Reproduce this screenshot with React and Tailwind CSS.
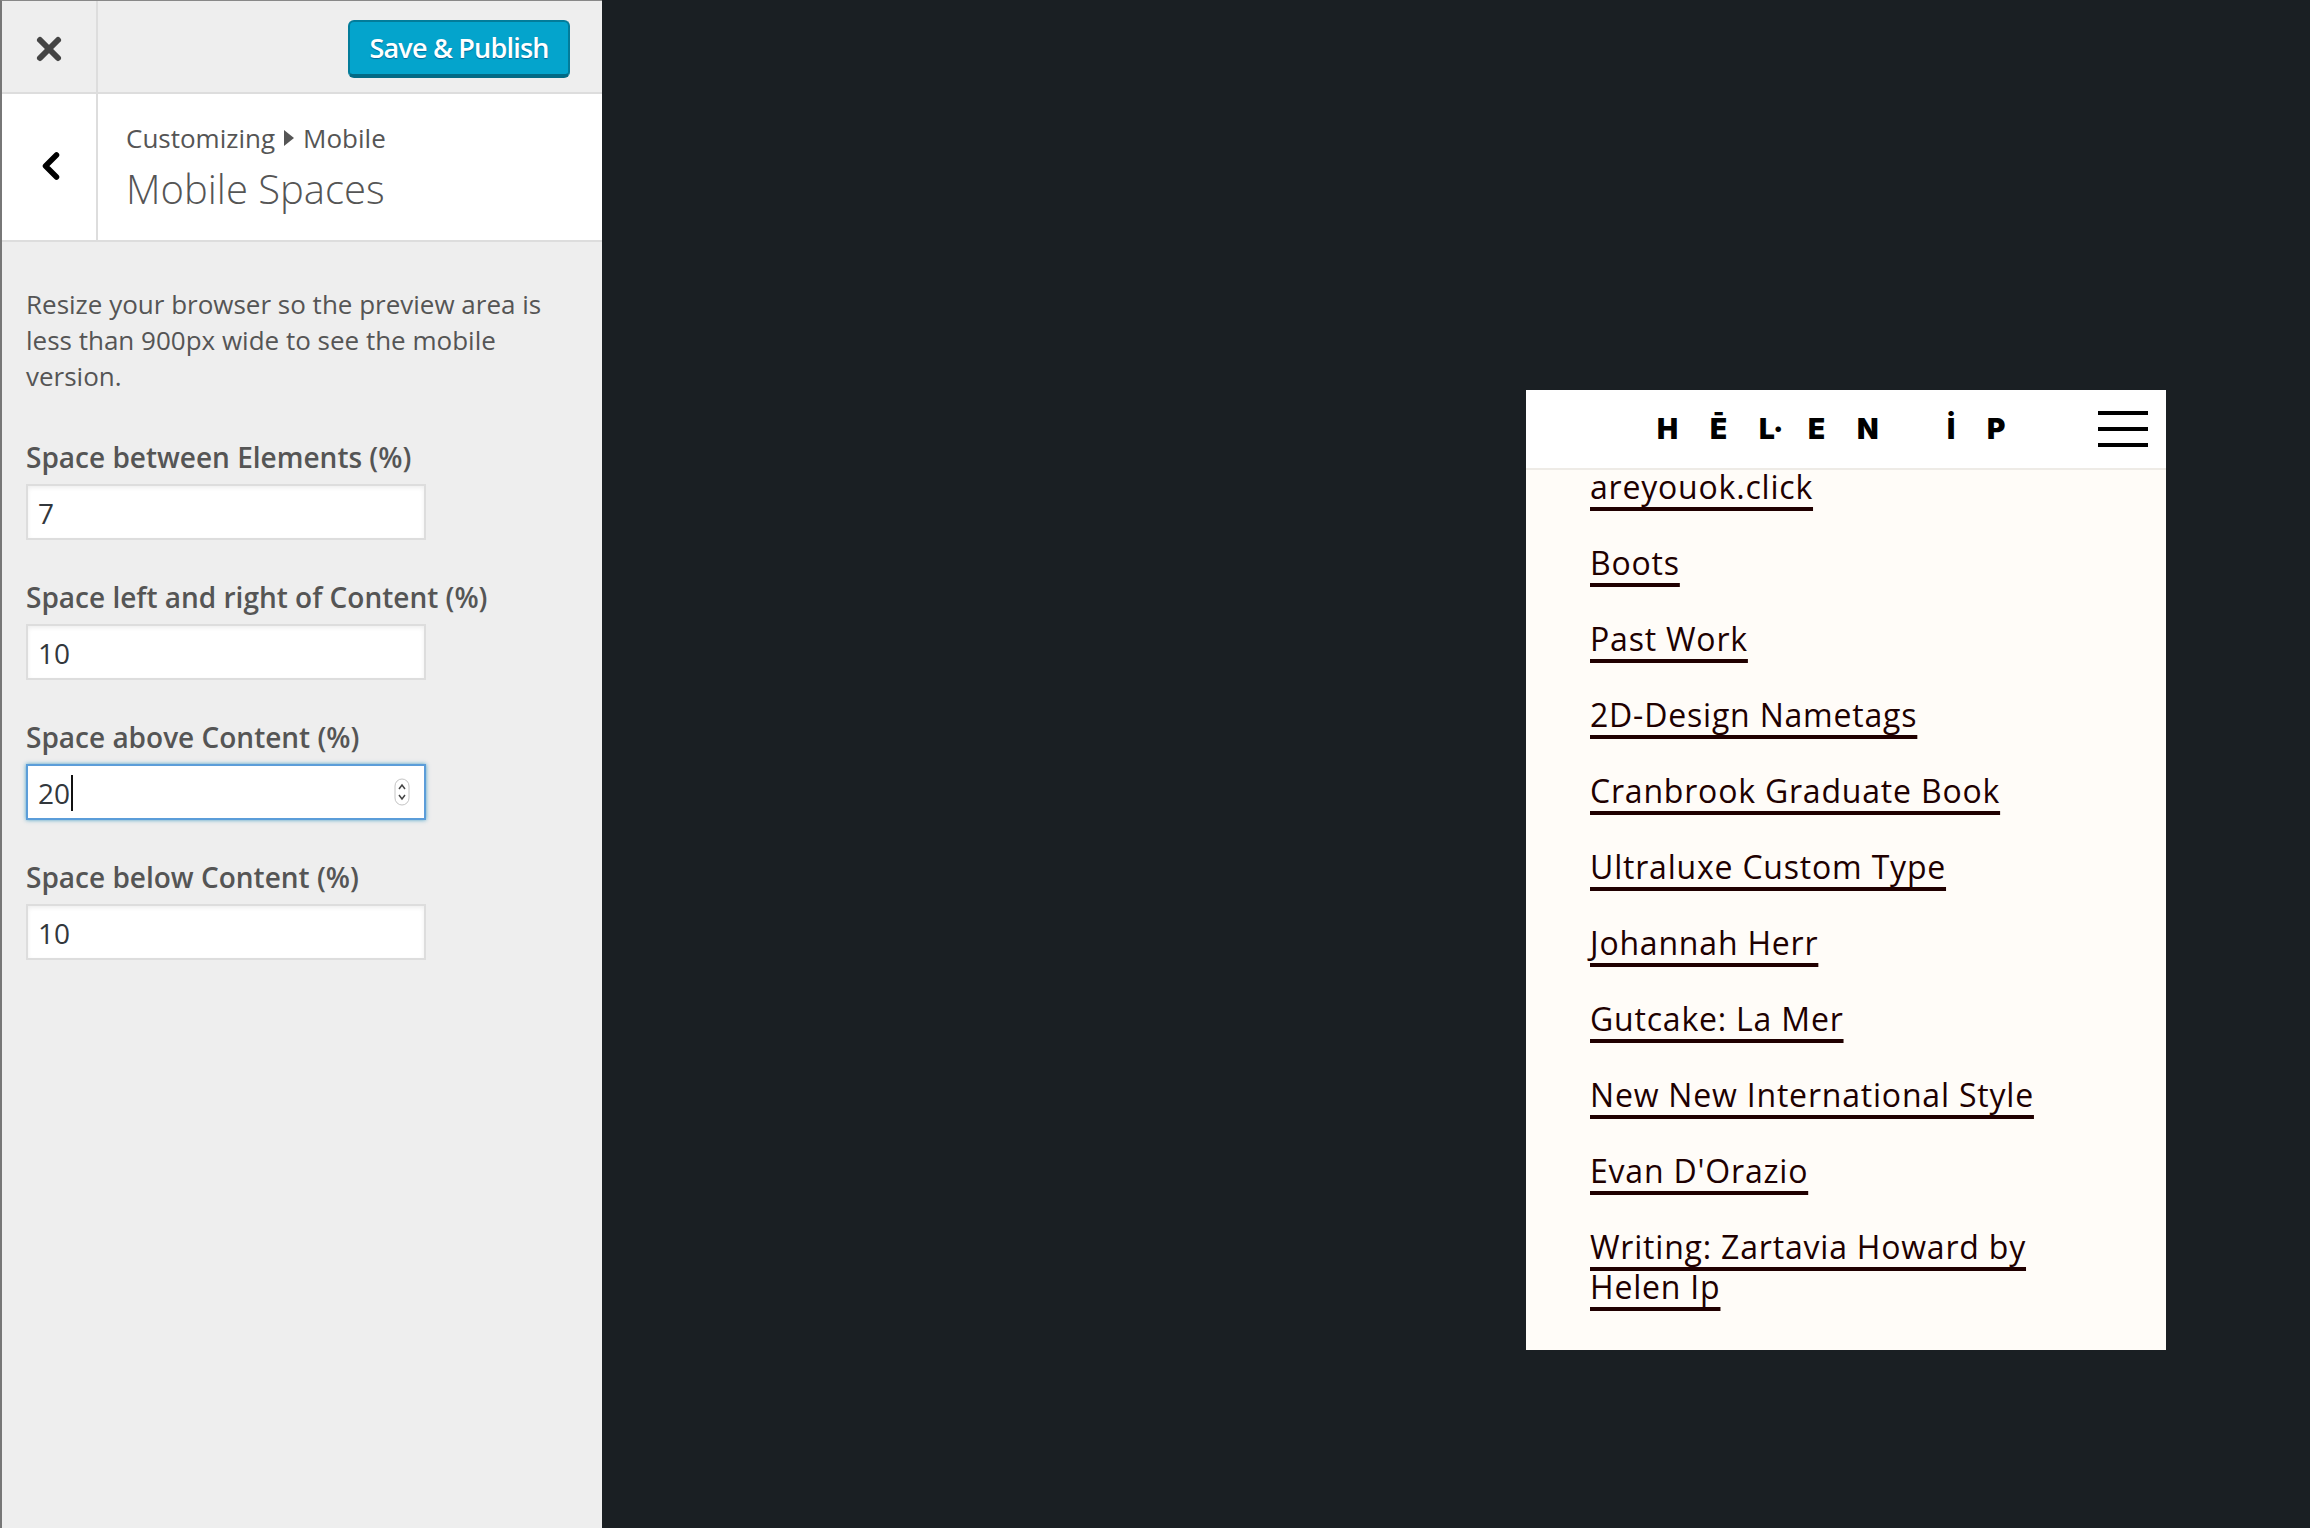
import { ChevronLeft, X } from 'lucide-react';

const fields = [
  { label: 'Space between Elements (%)', value: '7' },
  { label: 'Space left and right of Content (%)', value: '10' },
  { label: 'Space above Content (%)', value: '20', focused: true },
  { label: 'Space below Content (%)', value: '10' },
];

const links = [
  'areyouok.click',
  'Boots',
  'Past Work',
  '2D-Design Nametags',
  'Cranbrook Graduate Book',
  'Ultraluxe Custom Type',
  'Johannah Herr',
  'Gutcake: La Mer',
  'New New International Style',
  "Evan D'Orazio",
  'Writing: Zartavia Howard by Helen Ip',
];

const logoLetters = [
  { text: 'H', width: 'w-[53px]' },
  { text: 'Ē', width: 'w-[49px]' },
  { text: 'L·', width: 'w-[49px]' },
  { text: 'E', width: 'w-[49px]' },
  { text: 'N', width: 'w-[90px]' },
  { text: 'İ', width: 'w-[40px]' },
  { text: 'P', width: 'w-[30px]' },
];

const Field = ({ label, value, focused }) => (
  <div className="mb-[37px]">
    <div className="mb-[7px] text-[28px] leading-[40px] font-semibold text-[#555555]">{label}</div>
    <div
      className={`relative flex h-[56px] w-[400px] items-center border-2 bg-white px-[10px] pt-[2px] text-[28px] text-[#32373c] ${
        focused ? 'border-[#5b9dd9] shadow-[0_0_4px_rgba(30,140,190,0.8)]' : 'border-[#dddddd] shadow-[inset_0_2px_4px_rgba(0,0,0,0.07)]'
      }`}
    >
      <span>{value}</span>
      {focused && <span className="ml-[1px] h-[36px] w-[2px] bg-[#111111]" />}
      {focused && (
        <svg className="absolute top-[12px] right-[14px]" width="16" height="28" viewBox="0 0 16 28">
          <rect x="1" y="1" width="14" height="26" rx="7" fill="#fff" stroke="#c4c4c4" />
          <path d="M5 11l3-4 3 4M5 17l3 4 3-4" fill="none" stroke="#444" strokeWidth="1.5" />
        </svg>
      )}
    </div>
  </div>
);

const Sidebar = () => (
  <div className="flex h-full w-[602px] shrink-0 flex-col border-t border-l-2 border-t-[#888888] border-l-[#777777] bg-[#eeeeee] font-['Open_Sans',sans-serif]">
    <div className="flex h-[93px] shrink-0 border-b-2 border-[#dddddd]">
      <div className="flex w-[96px] items-center justify-center border-r-2 border-[#dddddd] pt-[4px] text-[#444444]">
        <X size={36} strokeWidth={4} />
      </div>
      <div className="flex flex-1 items-center justify-end pt-[4px] pr-[32px]">
        <div className="flex h-[58px] w-[222px] items-center justify-center rounded-[6px] border-2 border-b-4 border-[#037c9a] border-b-[#026a85] bg-[#04a4cc] pt-[2px] text-[27px] font-semibold tracking-[-0.8px] text-white [text-shadow:0_1px_1px_#006799]">
          Save &amp; Publish
        </div>
      </div>
    </div>
    <div className="flex h-[148px] shrink-0 border-b-2 border-[#dddddd] bg-white">
      <div className="flex w-[96px] items-center justify-center border-r-2 border-[#dddddd] pb-[2px] pl-[4px] text-black">
        <ChevronLeft size={44} strokeWidth={3} />
      </div>
      <div className="flex flex-col justify-center pl-[28px] text-[#555555]">
        <div className="flex items-center text-[26px] leading-[36px]">
          Customizing
          <svg className="mx-[9px]" width="10" height="18" viewBox="0 0 10 18">
            <path d="M0 1l10 8-10 8z" fill="#555555" />
          </svg>
          Mobile
        </div>
        <div className="mt-[7px] text-[40px] leading-[52px] font-light">Mobile Spaces</div>
      </div>
    </div>
    <div className="px-[24px] pt-[44px]">
      <p className="mb-[43px] w-[540px] text-[26px] leading-[36px] text-[#555555]">
        Resize your browser so the preview area is less than 900px wide to see the mobile version.
      </p>
      {fields.map((field) => (
        <Field key={field.label} {...field} />
      ))}
    </div>
  </div>
);

const Preview = () => (
  <div className="ml-[924px] flex h-[960px] w-[640px] shrink-0 flex-col overflow-hidden bg-[#fffcf8]">
    <div className="relative z-10 flex h-[80px] shrink-0 items-center border-b-2 border-[#eeebe6] bg-white">
      <div className="ml-[131px] flex font-['Inter',sans-serif] text-[28px] leading-none font-black text-black">
        {logoLetters.map((letter) => (
          <span key={letter.text} className={letter.width}>{letter.text}</span>
        ))}
      </div>
      <div className="absolute top-[21px] right-[18px] flex w-[50px] flex-col gap-[12px]">
        <div className="h-[4px] bg-black" />
        <div className="h-[4px] bg-black" />
        <div className="h-[4px] bg-black" />
      </div>
    </div>
    <div className="-mt-[3px] flex flex-col gap-[36px] pr-[120px] pl-[64px] font-['Open_Sans',sans-serif] text-[32px] leading-[40px] tracking-[0.8px] text-[#200000]">
      {links.map((link) => (
        <div key={link}>
          <span className="underline decoration-[#200000] decoration-4 underline-offset-[8px] [text-decoration-skip-ink:none]">{link}</span>
        </div>
      ))}
    </div>
  </div>
);

export default function App() {
  return (
    <div className="flex h-[1528px] w-[2310px] overflow-hidden bg-[#1a1f23]">
      <Sidebar />
      <div className="flex-1 pt-[390px]">
        <Preview />
      </div>
    </div>
  );
}
